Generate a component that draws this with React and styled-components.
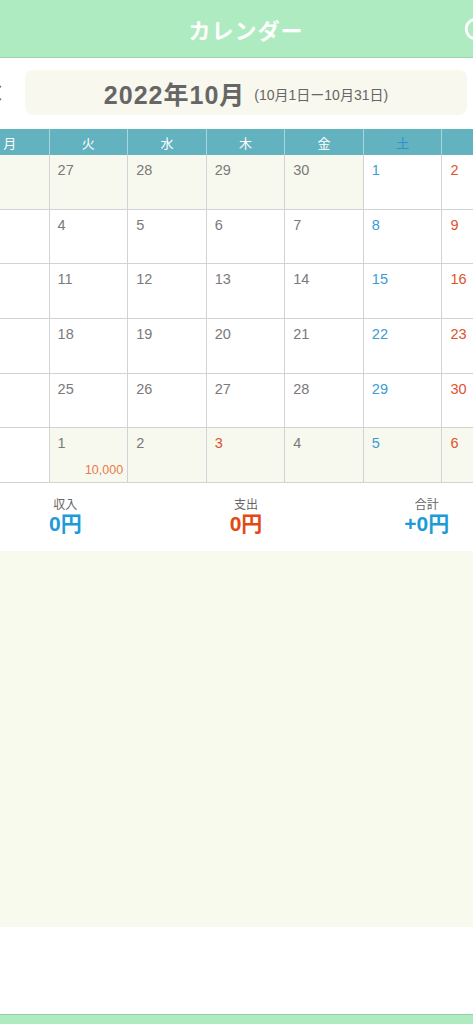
import React from "react";
import styled, { createGlobalStyle } from "styled-components";

const GlobalStyle = createGlobalStyle`
  html, body {
    margin: 0;
    padding: 0;
    background: #ffffff;
    overflow-x: hidden;
  }
  body {
    font-family: "Noto Sans CJK JP", "Noto Sans", sans-serif;
  }
`;

const numFont = `"Liberation Sans", "Noto Sans CJK JP", sans-serif`;

const weekDays = [
  { label: "月" },
  { label: "火" },
  { label: "水" },
  { label: "木" },
  { label: "金" },
  { label: "土", kind: "sat" },
  { label: "日", kind: "sun" },
];

// out = day outside the month (cream background)
const weeks = [
  [
    { d: 26, out: true },
    { d: 27, out: true },
    { d: 28, out: true },
    { d: 29, out: true },
    { d: 30, out: true },
    { d: 1, kind: "sat" },
    { d: 2, kind: "sun" },
  ],
  [{ d: 3 }, { d: 4 }, { d: 5 }, { d: 6 }, { d: 7 }, { d: 8, kind: "sat" }, { d: 9, kind: "sun" }],
  [{ d: 10, kind: "sun" }, { d: 11 }, { d: 12 }, { d: 13 }, { d: 14 }, { d: 15, kind: "sat" }, { d: 16, kind: "sun" }],
  [{ d: 17 }, { d: 18 }, { d: 19 }, { d: 20 }, { d: 21 }, { d: 22, kind: "sat" }, { d: 23, kind: "sun" }],
  [{ d: 24 }, { d: 25 }, { d: 26 }, { d: 27 }, { d: 28 }, { d: 29, kind: "sat" }, { d: 30, kind: "sun" }],
  [
    { d: 31 },
    { d: 1, out: true, amount: "10,000" },
    { d: 2, out: true },
    { d: 3, out: true, kind: "sun" },
    { d: 4, out: true },
    { d: 5, out: true, kind: "sat" },
    { d: 6, out: true, kind: "sun" },
  ],
];

const dayColor = (kind) =>
  kind === "sat" ? "#3c9bd4" : kind === "sun" ? "#e0522f" : "#7a7a7a";

export default function App() {
  return (
    <>
      <GlobalStyle />
      <Page>
        <Header>
          <Title>カレンダー</Title>
          <HeaderIcon viewBox="0 0 24 24">
            <circle cx="12" cy="12" r="9" fill="none" stroke="#fff" strokeWidth="2.6" />
          </HeaderIcon>
        </Header>

        <MonthRow>
          <Arrow viewBox="0 0 10 20">
            <path d="M8 3 L2 10 L8 17" fill="none" stroke="#777" strokeWidth="1.4" />
          </Arrow>
          <MonthBox>
            <MonthText>2022年10月</MonthText>
            <RangeText>(10月1日ー10月31日)</RangeText>
          </MonthBox>
          <Arrow viewBox="0 0 10 20">
            <path d="M2 3 L8 10 L2 17" fill="none" stroke="#777" strokeWidth="1.4" />
          </Arrow>
        </MonthRow>

        <WeekHeader>
          {weekDays.map((w) => (
            <WeekCell key={w.label} $kind={w.kind}>
              {w.label}
            </WeekCell>
          ))}
        </WeekHeader>

        <Grid>
          {weeks.map((week, wi) =>
            week.map((c, ci) => (
              <DayCell key={`${wi}-${ci}`} $out={c.out}>
                <DayNum $kind={c.kind}>{c.d}</DayNum>
                {c.amount && <Amount>{c.amount}</Amount>}
              </DayCell>
            ))
          )}
        </Grid>

        <Summary>
          <SummaryItem>
            <SummaryLabel>収入</SummaryLabel>
            <SummaryValue $color="#1d9bd8">0円</SummaryValue>
          </SummaryItem>
          <SummaryItem>
            <SummaryLabel>支出</SummaryLabel>
            <SummaryValue $color="#e34812">0円</SummaryValue>
          </SummaryItem>
          <SummaryItem>
            <SummaryLabel>合計</SummaryLabel>
            <SummaryValue $color="#1d9bd8">+0円</SummaryValue>
          </SummaryItem>
        </Summary>

        <ListArea />
        <Spacer />
        <TabBar />
      </Page>
    </>
  );
}

const Page = styled.div`
  width: 550px;
  margin-left: -29px;
  display: flex;
  flex-direction: column;
  height: 1024px;
  overflow: hidden;
`;

const Header = styled.header`
  height: 57px;
  flex-shrink: 0;
  background: #aeebc1;
  border-bottom: 1px solid #9fd6b0;
  display: flex;
  align-items: center;
  justify-content: center;
  position: relative;
`;

const Title = styled.h1`
  margin: 0;
  color: #ffffff;
  font-size: 22px;
  font-weight: 700;
  letter-spacing: 1px;
`;

const HeaderIcon = styled.svg`
  position: absolute;
  right: 32px;
  top: 16px;
  width: 26px;
  height: 26px;
`;

const MonthRow = styled.div`
  display: flex;
  align-items: center;
  margin-top: 12px;
  height: 45px;
  flex-shrink: 0;
`;

const Arrow = styled.svg`
  width: 54px;
  height: 20px;
  flex-shrink: 0;
`;

const MonthBox = styled.div`
  flex: 1;
  height: 45px;
  border-radius: 8px;
  background: #f8f8ee;
  display: flex;
  align-items: center;
  justify-content: center;
  gap: 9px;
`;

const MonthText = styled.span`
  font-size: 25px;
  font-weight: 700;
  letter-spacing: 1px;
  color: #666666;
  font-family: ${numFont};
`;

const RangeText = styled.span`
  font-size: 14px;
  color: #666666;
  margin-top: 2px;
  font-family: ${numFont};
`;

const WeekHeader = styled.div`
  margin-top: 14px;
  display: grid;
  grid-template-columns: repeat(7, 1fr);
  height: 26px;
  flex-shrink: 0;
  background: #63b2bf;
`;

const WeekCell = styled.div`
  display: flex;
  align-items: center;
  justify-content: center;
  font-size: 13px;
  color: ${(p) => (p.$kind === "sat" ? "#2f8fd0" : p.$kind === "sun" ? "#e0522f" : "#ffffff")};
  border-right: 1px solid #a9d6dc;
  box-sizing: border-box;
`;

const Grid = styled.div`
  display: grid;
  grid-template-columns: repeat(7, 1fr);
  grid-auto-rows: 54.67px;
  flex-shrink: 0;
`;

const DayCell = styled.div`
  position: relative;
  box-sizing: border-box;
  border-right: 1.5px solid #d3d3d3;
  border-bottom: 1.5px solid #d3d3d3;
  background: ${(p) => (p.$out ? "#f8f9ee" : "#ffffff")};
  padding: 4px 8px;
  line-height: 18px;
`;

const DayNum = styled.span`
  font-size: 14.5px;
  font-family: ${numFont};
  color: ${(p) => dayColor(p.$kind)};
`;

const Amount = styled.span`
  position: absolute;
  right: 4px;
  bottom: 3px;
  font-size: 12.5px;
  font-family: ${numFont};
  color: #e8794a;
`;

const Summary = styled.div`
  height: 68px;
  flex-shrink: 0;
  display: grid;
  grid-template-columns: repeat(3, 1fr);
  padding: 0 4px;
  background: #ffffff;
`;

const SummaryItem = styled.div`
  display: flex;
  flex-direction: column;
  align-items: center;
  justify-content: center;
  padding-bottom: 2px;
  gap: 1px;
`;

const SummaryLabel = styled.span`
  font-size: 12px;
  color: #666666;
  line-height: 16px;
`;

const SummaryValue = styled.span`
  font-size: 21px;
  font-weight: 700;
  font-family: ${numFont};
  color: ${(p) => p.$color};
  line-height: 22px;
`;

const ListArea = styled.div`
  height: 376px;
  flex-shrink: 0;
  background: #f9faee;
`;

const Spacer = styled.div`
  flex: 1;
  background: #ffffff;
`;

const TabBar = styled.div`
  height: 9px;
  flex-shrink: 0;
  background: #aeebc1;
  border-top: 1px solid #9cc8aa;
`;
